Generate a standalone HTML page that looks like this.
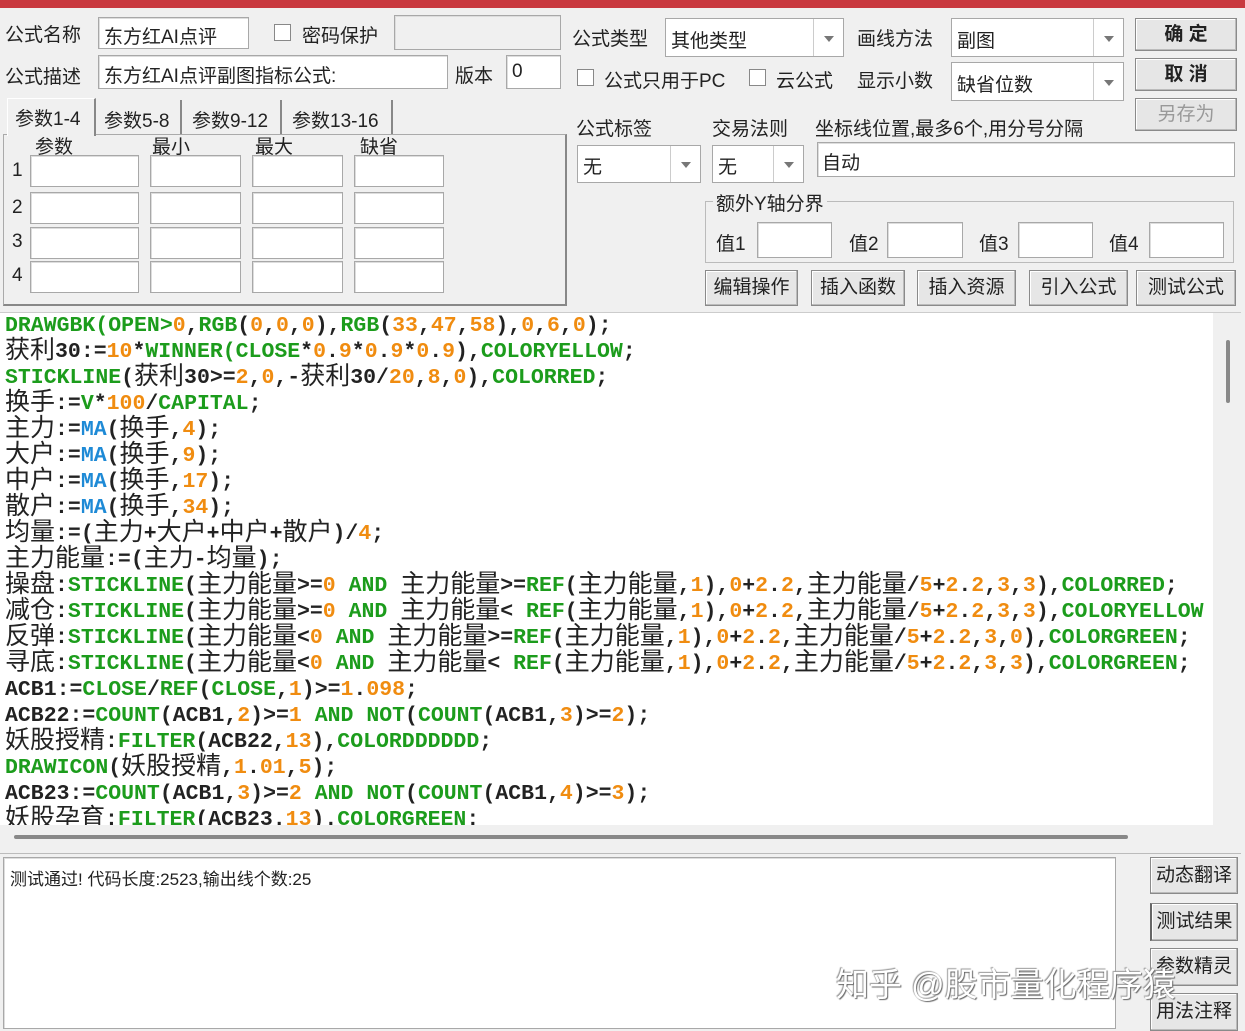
<!DOCTYPE html>
<html><head><meta charset="utf-8"><style>
*{margin:0;padding:0;box-sizing:border-box}
body{width:1245px;height:1031px;background:#f0f0f0;position:relative;overflow:hidden;font-family:"Liberation Sans","Noto Sans CJK SC",sans-serif;font-size:19px;color:#222}
.a{position:absolute;white-space:nowrap}
.in{position:absolute;background:#fff;border:1px solid #a8a8a8;box-shadow:inset 1px 1px 0 #ddd}
.cb{position:absolute;width:17px;height:17px;background:#fff;border:1px solid #888}
.btn{position:absolute;background:#e6e6e6;border:1px solid #8a8a8a;box-shadow:inset -1px -1px 0 #bbb,inset 1px 1px 0 #fff;text-align:center;font-size:19px}
.sel{position:absolute;background:#fff;border:1px solid #a8a8a8}
.sel i{position:absolute;right:0;top:0;bottom:0;width:30px;border-left:1px solid #ccc}
.sel i:after{content:"";position:absolute;left:10px;top:50%;margin-top:-2px;border:5px solid transparent;border-top:6px solid #777}
#code{position:absolute;left:0;top:313px;width:1213px;height:512px;background:#fff;overflow:hidden;font-family:"Liberation Mono","Noto Sans CJK SC",monospace;font-weight:bold;font-size:21.5px;line-height:26px;color:#222;padding-left:5px;letter-spacing:0}
#code div{white-space:nowrap;height:26px;line-height:26px;overflow:visible}
.g{color:#1c9c1c}.o{color:#f08c10}.b{color:#1e8ad6}
.c{font-family:"Noto Sans CJK SC",sans-serif;font-weight:normal;font-size:25px;color:#222;line-height:0;vertical-align:-1px}
</style></head><body>
<div class="a" style="left:0;top:0;width:1245px;height:8px;background:#c9393f"></div>

<div class="a" style="left:5px;top:20px">公式名称</div>
<div class="in" style="left:98px;top:17px;width:151px;height:32px"></div>
<div class="a" style="left:104px;top:22px">东方红AI点评</div>
<div class="cb" style="left:274px;top:24px"></div>
<div class="a" style="left:302px;top:21px">密码保护</div>
<div class="in" style="left:394px;top:15px;width:167px;height:35px;background:#f0f0f0"></div>
<div class="a" style="left:5px;top:62px">公式描述</div>
<div class="in" style="left:98px;top:55px;width:350px;height:34px"></div>
<div class="a" style="left:104px;top:61px">东方红AI点评副图指标公式:</div>
<div class="a" style="left:455px;top:61px">版本</div>
<div class="in" style="left:506px;top:55px;width:55px;height:34px"></div>
<div class="a" style="left:512px;top:61px">0</div>

<div class="a" style="left:3px;top:134px;width:564px;height:172px;border:1px solid #aaa;border-right:2px solid #888;border-bottom:2px solid #888"></div>
<div class="a" style="left:7px;top:98px;width:89px;height:38px;background:#f0f0f0;border-right:2px solid #888;border-left:1px solid #fff;border-top:1px solid #fff"></div>
<div class="a" style="left:15px;top:104px">参数1-4</div>
<div class="a" style="left:104px;top:106px">参数5-8</div>
<div class="a" style="left:180px;top:100px;height:34px;border-left:2px solid #888"></div>
<div class="a" style="left:192px;top:106px">参数9-12</div>
<div class="a" style="left:280px;top:100px;height:34px;border-left:2px solid #888"></div>
<div class="a" style="left:292px;top:106px">参数13-16</div>
<div class="a" style="left:391px;top:100px;height:34px;border-left:2px solid #888"></div>
<div class="a" style="left:35px;top:132px">参数</div>
<div class="a" style="left:152px;top:132px">最小</div>
<div class="a" style="left:255px;top:132px">最大</div>
<div class="a" style="left:360px;top:132px">缺省</div>
<div class="a" style="left:12px;top:160px">1</div>
<div class="a" style="left:12px;top:197px">2</div>
<div class="a" style="left:12px;top:231px">3</div>
<div class="a" style="left:12px;top:265px">4</div>
<div class="in" style="left:30px;top:155px;width:109px;height:32px"></div><div class="in" style="left:150px;top:155px;width:91px;height:32px"></div><div class="in" style="left:252px;top:155px;width:91px;height:32px"></div><div class="in" style="left:354px;top:155px;width:90px;height:32px"></div>
<div class="in" style="left:30px;top:192px;width:109px;height:32px"></div><div class="in" style="left:150px;top:192px;width:91px;height:32px"></div><div class="in" style="left:252px;top:192px;width:91px;height:32px"></div><div class="in" style="left:354px;top:192px;width:90px;height:32px"></div>
<div class="in" style="left:30px;top:227px;width:109px;height:32px"></div><div class="in" style="left:150px;top:227px;width:91px;height:32px"></div><div class="in" style="left:252px;top:227px;width:91px;height:32px"></div><div class="in" style="left:354px;top:227px;width:90px;height:32px"></div>
<div class="in" style="left:30px;top:261px;width:109px;height:32px"></div><div class="in" style="left:150px;top:261px;width:91px;height:32px"></div><div class="in" style="left:252px;top:261px;width:91px;height:32px"></div><div class="in" style="left:354px;top:261px;width:90px;height:32px"></div>

<div class="a" style="left:572px;top:24px">公式类型</div>
<div class="sel" style="left:665px;top:18px;width:179px;height:39px"><i></i></div>
<div class="a" style="left:671px;top:26px">其他类型</div>
<div class="a" style="left:857px;top:24px">画线方法</div>
<div class="sel" style="left:951px;top:18px;width:173px;height:39px"><i></i></div>
<div class="a" style="left:957px;top:26px">副图</div>
<div class="btn" style="left:1135px;top:18px;width:102px;height:33px;line-height:31px;font-weight:bold">确 定</div>
<div class="btn" style="left:1135px;top:58px;width:102px;height:33px;line-height:31px;font-weight:bold">取 消</div>
<div class="btn" style="left:1135px;top:98px;width:102px;height:33px;line-height:31px;color:#999">另存为</div>
<div class="cb" style="left:577px;top:69px"></div>
<div class="a" style="left:604px;top:66px">公式只用于PC</div>
<div class="cb" style="left:749px;top:69px"></div>
<div class="a" style="left:776px;top:66px">云公式</div>
<div class="a" style="left:857px;top:66px">显示小数</div>
<div class="sel" style="left:951px;top:62px;width:173px;height:39px"><i></i></div>
<div class="a" style="left:957px;top:70px">缺省位数</div>

<div class="a" style="left:576px;top:114px">公式标签</div>
<div class="a" style="left:712px;top:114px">交易法则</div>
<div class="a" style="left:815px;top:114px">坐标线位置,最多6个,用分号分隔</div>
<div class="sel" style="left:577px;top:145px;width:124px;height:38px"><i></i></div>
<div class="a" style="left:583px;top:152px">无</div>
<div class="sel" style="left:712px;top:145px;width:92px;height:38px"><i></i></div>
<div class="a" style="left:718px;top:152px">无</div>
<div class="in" style="left:817px;top:142px;width:418px;height:35px"></div>
<div class="a" style="left:822px;top:148px">自动</div>

<div class="a" style="left:705px;top:201px;width:529px;height:62px;border:1px solid #bbb"></div>
<div class="a" style="left:713px;top:189px;background:#f0f0f0;padding:0 3px">额外Y轴分界</div>
<div class="a" style="left:716px;top:229px">值1</div><div class="in" style="left:757px;top:222px;width:75px;height:36px"></div>
<div class="a" style="left:849px;top:229px">值2</div><div class="in" style="left:887px;top:222px;width:76px;height:36px"></div>
<div class="a" style="left:979px;top:229px">值3</div><div class="in" style="left:1018px;top:222px;width:75px;height:36px"></div>
<div class="a" style="left:1109px;top:229px">值4</div><div class="in" style="left:1149px;top:222px;width:75px;height:36px"></div>

<div class="btn" style="left:705px;top:270px;width:93px;height:36px;line-height:34px">编辑操作</div>
<div class="btn" style="left:811px;top:270px;width:94px;height:36px;line-height:34px">插入函数</div>
<div class="btn" style="left:917px;top:270px;width:99px;height:36px;line-height:34px">插入资源</div>
<div class="btn" style="left:1029px;top:270px;width:99px;height:36px;line-height:34px">引入公式</div>
<div class="btn" style="left:1136px;top:270px;width:100px;height:36px;line-height:34px">测试公式</div>

<div class="a" style="left:0;top:312px;width:1241px;height:1px;background:#ccc"></div>
<div id="code">
<div><span class="g">DRAWGBK(OPEN&gt;</span><span class="o">0</span>,<span class="g">RGB</span>(<span class="o">0</span>,<span class="o">0</span>,<span class="o">0</span>),<span class="g">RGB</span>(<span class="o">33</span>,<span class="o">47</span>,<span class="o">58</span>),<span class="o">0</span>,<span class="o">6</span>,<span class="o">0</span>);</div>
<div><span class="c">获利</span>30:=<span class="o">10</span>*<span class="g">WINNER(CLOSE</span>*<span class="o">0</span>.<span class="o">9</span>*<span class="o">0</span>.<span class="o">9</span>*<span class="o">0</span>.<span class="o">9</span>),<span class="g">COLORYELLOW</span>;</div>
<div><span class="g">STICKLINE</span>(<span class="c">获利</span>30&gt;=<span class="o">2</span>,<span class="o">0</span>,-<span class="c">获利</span>30/<span class="o">20</span>,<span class="o">8</span>,<span class="o">0</span>),<span class="g">COLORRED</span>;</div>
<div><span class="c">换手</span>:=<span class="g">V</span>*<span class="o">100</span>/<span class="g">CAPITAL</span>;</div>
<div><span class="c">主力</span>:=<span class="b">MA</span>(<span class="c">换手</span>,<span class="o">4</span>);</div>
<div><span class="c">大户</span>:=<span class="b">MA</span>(<span class="c">换手</span>,<span class="o">9</span>);</div>
<div><span class="c">中户</span>:=<span class="b">MA</span>(<span class="c">换手</span>,<span class="o">17</span>);</div>
<div><span class="c">散户</span>:=<span class="b">MA</span>(<span class="c">换手</span>,<span class="o">34</span>);</div>
<div><span class="c">均量</span>:=(<span class="c">主力</span>+<span class="c">大户</span>+<span class="c">中户</span>+<span class="c">散户</span>)/<span class="o">4</span>;</div>
<div><span class="c">主力能量</span>:=(<span class="c">主力</span>-<span class="c">均量</span>);</div>
<div><span class="c">操盘</span>:<span class="g">STICKLINE</span>(<span class="c">主力能量</span>&gt;=<span class="o">0</span> <span class="g">AND</span> <span class="c">主力能量</span>&gt;=<span class="g">REF</span>(<span class="c">主力能量</span>,<span class="o">1</span>),<span class="o">0</span>+<span class="o">2</span>.<span class="o">2</span>,<span class="c">主力能量</span>/<span class="o">5</span>+<span class="o">2</span>.<span class="o">2</span>,<span class="o">3</span>,<span class="o">3</span>),<span class="g">COLORRED</span>;</div>
<div><span class="c">减仓</span>:<span class="g">STICKLINE</span>(<span class="c">主力能量</span>&gt;=<span class="o">0</span> <span class="g">AND</span> <span class="c">主力能量</span>&lt; <span class="g">REF</span>(<span class="c">主力能量</span>,<span class="o">1</span>),<span class="o">0</span>+<span class="o">2</span>.<span class="o">2</span>,<span class="c">主力能量</span>/<span class="o">5</span>+<span class="o">2</span>.<span class="o">2</span>,<span class="o">3</span>,<span class="o">3</span>),<span class="g">COLORYELLOW</span></div>
<div><span class="c">反弹</span>:<span class="g">STICKLINE</span>(<span class="c">主力能量</span>&lt;<span class="o">0</span> <span class="g">AND</span> <span class="c">主力能量</span>&gt;=<span class="g">REF</span>(<span class="c">主力能量</span>,<span class="o">1</span>),<span class="o">0</span>+<span class="o">2</span>.<span class="o">2</span>,<span class="c">主力能量</span>/<span class="o">5</span>+<span class="o">2</span>.<span class="o">2</span>,<span class="o">3</span>,<span class="o">0</span>),<span class="g">COLORGREEN</span>;</div>
<div><span class="c">寻底</span>:<span class="g">STICKLINE</span>(<span class="c">主力能量</span>&lt;<span class="o">0</span> <span class="g">AND</span> <span class="c">主力能量</span>&lt; <span class="g">REF</span>(<span class="c">主力能量</span>,<span class="o">1</span>),<span class="o">0</span>+<span class="o">2</span>.<span class="o">2</span>,<span class="c">主力能量</span>/<span class="o">5</span>+<span class="o">2</span>.<span class="o">2</span>,<span class="o">3</span>,<span class="o">3</span>),<span class="g">COLORGREEN</span>;</div>
<div>ACB1:=<span class="g">CLOSE</span>/<span class="g">REF</span>(<span class="g">CLOSE</span>,<span class="o">1</span>)&gt;=<span class="o">1</span>.<span class="o">098</span>;</div>
<div>ACB22:=<span class="g">COUNT</span>(ACB1,<span class="o">2</span>)&gt;=<span class="o">1</span> <span class="g">AND</span> <span class="g">NOT</span>(<span class="g">COUNT</span>(ACB1,<span class="o">3</span>)&gt;=<span class="o">2</span>);</div>
<div><span class="c">妖股授精</span>:<span class="g">FILTER</span>(ACB22,<span class="o">13</span>),<span class="g">COLORDDDDDD</span>;</div>
<div><span class="g">DRAWICON</span>(<span class="c">妖股授精</span>,<span class="o">1</span>.<span class="o">01</span>,<span class="o">5</span>);</div>
<div>ACB23:=<span class="g">COUNT</span>(ACB1,<span class="o">3</span>)&gt;=<span class="o">2</span> <span class="g">AND</span> <span class="g">NOT</span>(<span class="g">COUNT</span>(ACB1,<span class="o">4</span>)&gt;=<span class="o">3</span>);</div>
<div><span class="c">妖股孕育</span>:<span class="g">FILTER</span>(ACB23.<span class="o">13</span>).<span class="g">COLORGREEN</span>:</div>
</div>
<div class="a" style="left:1213px;top:313px;width:28px;height:512px;background:#f0f0f0"></div>
<div class="a" style="left:1226px;top:340px;width:4px;height:63px;background:#888;border-radius:2px"></div>
<div class="a" style="left:14px;top:835px;width:1114px;height:4px;background:#888;border-radius:2px"></div>
<div class="a" style="left:0;top:853px;width:1241px;height:1px;background:#bbb"></div>

<div class="in" style="left:3px;top:857px;width:1113px;height:172px"></div>
<div class="a" style="left:10px;top:865px;font-size:17px">测试通过! 代码长度:2523,输出线个数:25</div>
<div class="btn" style="left:1150px;top:857px;width:88px;height:37px;line-height:35px">动态翻译</div>
<div class="btn" style="left:1150px;top:903px;width:88px;height:38px;line-height:36px;border-left:2px solid #666">测试结果</div>
<div class="btn" style="left:1150px;top:948px;width:88px;height:38px;line-height:36px">参数精灵</div>
<div class="btn" style="left:1150px;top:993px;width:88px;height:38px;line-height:36px">用法注释</div>
<div class="a" style="left:836px;top:958px;font-size:33px;color:#fff;text-shadow:1px 1px 1px #666,-1px -1px 1px #999">知乎 @股市量化程序猿</div>
</body></html>
